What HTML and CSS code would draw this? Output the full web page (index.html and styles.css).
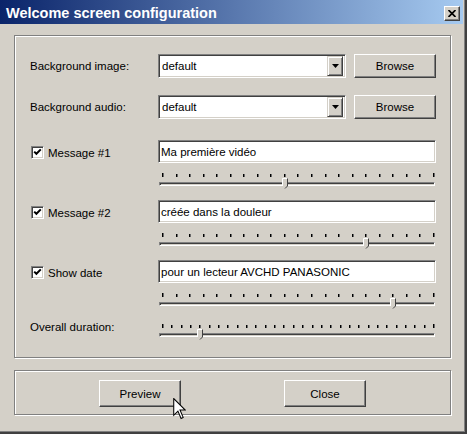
FILE: index.html
```html
<!DOCTYPE html>
<html lang="fr">
<head>
<meta charset="utf-8">
<title>Welcome screen configuration</title>
<link rel="stylesheet" href="styles.css">
</head>
<body>
<div class="window">
  <div class="titlebar">
    <span class="title">Welcome screen configuration</span>
    <span class="close-btn"><svg width="8" height="7" viewBox="0 0 8 7"><path d="M0.5 0 L7.5 7 M7.5 0 L0.5 7" stroke="#000" stroke-width="1.7" fill="none"/></svg></span>
  </div>
  <div class="body">
    <div class="group main">
      <div class="row file-row">
        <span class="label">Background image:</span>
        <div class="file-ctrls">
          <div class="combo"><span class="combo-text">default</span><span class="combo-btn"><svg width="7" height="4" viewBox="0 0 7 4"><polygon points="0,0 7,0 3.5,4" fill="#000"/></svg></span></div>
          <button class="btn browse">Browse</button>
        </div>
      </div>
      <div class="row file-row second">
        <span class="label">Background audio:</span>
        <div class="file-ctrls">
          <div class="combo"><span class="combo-text">default</span><span class="combo-btn"><svg width="7" height="4" viewBox="0 0 7 4"><polygon points="0,0 7,0 3.5,4" fill="#000"/></svg></span></div>
          <button class="btn browse">Browse</button>
        </div>
      </div>

      <div class="msg first">
        <label class="check"><span class="box"><svg width="9" height="9" viewBox="0 0 9 9"><path d="M1.2 3.6 L3.4 5.8 L7.8 1.4" stroke="#000" stroke-width="2" fill="none"/></svg></span>Message #1</label>
        <div class="textbox">Ma première vidéo</div>
        <div class="slider">
          <div class="ticks"><i class="end"></i><i></i><i></i><i></i><i></i><i></i><i></i><i></i><i></i><i></i><i></i><i></i><i></i><i></i><i></i><i></i><i></i><i></i><i></i><i></i><i class="end"></i></div>
          <div class="track"></div>
          <svg class="thumb" style="left:124px" width="6" height="11" viewBox="0 0 6 11"><polygon points="0.5,0.5 5.5,0.5 5.5,8 3,10.5 0.5,8" fill="#D4D0C8"/><polyline points="0.5,8 0.5,0.5 5.5,0.5" stroke="#fff" fill="none"/><polyline points="5.5,0.5 5.5,8 3,10.5" stroke="#404040" fill="none"/></svg>
        </div>
      </div>

      <div class="msg">
        <label class="check"><span class="box"><svg width="9" height="9" viewBox="0 0 9 9"><path d="M1.2 3.6 L3.4 5.8 L7.8 1.4" stroke="#000" stroke-width="2" fill="none"/></svg></span>Message #2</label>
        <div class="textbox">créée dans la douleur</div>
        <div class="slider">
          <div class="ticks"><i class="end"></i><i></i><i></i><i></i><i></i><i></i><i></i><i></i><i></i><i></i><i></i><i></i><i></i><i></i><i></i><i></i><i></i><i></i><i></i><i></i><i class="end"></i></div>
          <div class="track"></div>
          <svg class="thumb" style="left:205px" width="6" height="11" viewBox="0 0 6 11"><polygon points="0.5,0.5 5.5,0.5 5.5,8 3,10.5 0.5,8" fill="#D4D0C8"/><polyline points="0.5,8 0.5,0.5 5.5,0.5" stroke="#fff" fill="none"/><polyline points="5.5,0.5 5.5,8 3,10.5" stroke="#404040" fill="none"/></svg>
        </div>
      </div>

      <div class="msg">
        <label class="check"><span class="box"><svg width="9" height="9" viewBox="0 0 9 9"><path d="M1.2 3.6 L3.4 5.8 L7.8 1.4" stroke="#000" stroke-width="2" fill="none"/></svg></span>Show date</label>
        <div class="textbox">pour un lecteur AVCHD PANASONIC</div>
        <div class="slider">
          <div class="ticks"><i class="end"></i><i></i><i></i><i></i><i></i><i></i><i></i><i></i><i></i><i></i><i></i><i></i><i></i><i></i><i></i><i></i><i></i><i></i><i></i><i></i><i class="end"></i></div>
          <div class="track"></div>
          <svg class="thumb" style="left:232px" width="6" height="11" viewBox="0 0 6 11"><polygon points="0.5,0.5 5.5,0.5 5.5,8 3,10.5 0.5,8" fill="#D4D0C8"/><polyline points="0.5,8 0.5,0.5 5.5,0.5" stroke="#fff" fill="none"/><polyline points="5.5,0.5 5.5,8 3,10.5" stroke="#404040" fill="none"/></svg>
        </div>
      </div>

      <div class="row overall">
        <span class="label">Overall duration:</span>
        <div class="slider">
          <div class="ticks"><i class="end"></i><i></i><i></i><i></i><i></i><i></i><i></i><i></i><i></i><i></i><i></i><i></i><i></i><i></i><i></i><i></i><i></i><i></i><i></i><i></i><i></i><i></i><i></i><i></i><i></i><i></i><i></i><i></i><i></i><i class="end"></i></div>
          <div class="track"></div>
          <svg class="thumb" style="left:39px" width="6" height="11" viewBox="0 0 6 11"><polygon points="0.5,0.5 5.5,0.5 5.5,8 3,10.5 0.5,8" fill="#D4D0C8"/><polyline points="0.5,8 0.5,0.5 5.5,0.5" stroke="#fff" fill="none"/><polyline points="5.5,0.5 5.5,8 3,10.5" stroke="#404040" fill="none"/></svg>
        </div>
      </div>
    </div>

    <div class="group actions">
      <button class="btn action">Preview</button>
      <button class="btn action">Close</button>
    </div>
  </div>

  <svg class="cursor" width="13" height="22" viewBox="0 0 12 21"><polygon points="0.5,0.5 0.5,16.5 4.5,12.5 7.5,19.5 9.5,18.5 6.5,11.5 11.5,11.5" fill="#fff" stroke="#000" stroke-width="1" stroke-linejoin="miter"/></svg>
</div>
</body>
</html>
```

FILE: styles.css
```css
* { box-sizing: border-box; }
html, body { margin: 0; padding: 0; }
body {
  background: #D4D0C8;
  font-family: "Liberation Sans", Arial, sans-serif;
  font-size: 11.5px;
  color: #000;
}
.window {
  position: relative;
  width: 467px;
  height: 434px;
  background: #D4D0C8;
  box-shadow: inset -1px -1px #404040, inset -2px -2px #404040, inset -3px -3px #808080;
  overflow: hidden;
}
.titlebar {
  display: flex;
  align-items: center;
  width: 463px;
  height: 24px;
  padding: 0 3px 0 6px;
  background: linear-gradient(to right, #0A246A, #A6CAF0);
}
.title {
  color: #fff;
  font-weight: bold;
  font-size: 14.5px;
  line-height: 24px;
  padding-top: 1px;
  white-space: nowrap;
}
.close-btn {
  margin-left: auto;
  margin-top: 2px;
  width: 16px;
  height: 15px;
  display: flex;
  align-items: center;
  justify-content: center;
  background: #D4D0C8;
  border: 1px solid;
  border-color: #fff #404040 #404040 #fff;
  box-shadow: inset -1px -1px #808080;
}
.body {
  padding: 11px 0 0 14px;
}
.group {
  width: 437px;
  border: 1px solid #808080;
  box-shadow: inset 1px 1px #fff, 1px 1px #fff;
}
.main {
  height: 323px;
  padding: 18px 14px 0 15px;
}
.row, .msg {
  display: grid;
  grid-template-columns: 128px 278px;
}
.row { align-items: center; }
.file-row { height: 24px; }
.file-row.second { margin-top: 17px; }
.label { white-space: nowrap; }
.file-ctrls {
  display: flex;
  gap: 8px;
}
.combo, .textbox {
  background: #fff;
  border: 1px solid;
  border-color: #808080 #fff #fff #808080;
  box-shadow: inset 1px 1px #404040, inset -1px -1px #D4D0C8;
}
.combo {
  display: flex;
  width: 188px;
  height: 24px;
  padding: 1px;
}
.combo-text {
  flex: 1;
  display: flex;
  align-items: center;
  padding-left: 2px;
}
.combo-btn {
  width: 16px;
  height: 20px;
  margin-right: 1px;
  display: flex;
  align-items: center;
  justify-content: center;
  background: #D4D0C8;
  border: 1px solid;
  border-color: #D4D0C8 #404040 #404040 #D4D0C8;
  box-shadow: inset 1px 1px #fff, inset -1px -1px #808080;
}
.btn {
  font-family: "Liberation Sans", Arial, sans-serif;
  font-size: 11.5px;
  color: #000;
  background: #D4D0C8;
  border: 1px solid;
  border-color: #fff #404040 #404040 #fff;
  box-shadow: inset -1px -1px #808080;
  padding: 0;
  margin: 0;
}
.browse { width: 82px; height: 24px; }
.msg {
  align-items: center;
  row-gap: 10px;
  margin-top: 10px;
}
.msg.first { margin-top: 21px; }
.check {
  display: flex;
  align-items: center;
  gap: 4px;
  margin-left: 1px;
  margin-top: 2px;
  white-space: nowrap;
}
.box {
  width: 13px;
  height: 13px;
  display: flex;
  align-items: center;
  justify-content: center;
  background: #fff;
  border: 1px solid;
  border-color: #808080 #fff #fff #808080;
  box-shadow: inset 1px 1px #404040, inset -1px -1px #D4D0C8;
}
.textbox {
  height: 23px;
  display: flex;
  align-items: center;
  padding-left: 2px;
  white-space: nowrap;
}
.slider {
  grid-column: 2;
  position: relative;
  height: 17px;
}
.ticks {
  display: flex;
  justify-content: space-between;
  align-items: flex-end;
  margin-left: 4px;
  width: 272px;
  height: 4px;
}
.ticks i {
  display: block;
  width: 1px;
  height: 3px;
  background: #000;
  box-shadow: 1px 0 #6a6a6a;
}
.ticks i.end { height: 4px; }
.track {
  margin-top: 5px;
  margin-left: 1px;
  width: 276px;
  height: 4px;
  background: #D4D0C8;
  border: 1px solid;
  border-color: #808080 #fff #fff #808080;
  box-shadow: inset 1px 1px #404040;
}
.thumb {
  position: absolute;
  top: 5px;
}
.overall {
  margin-top: 14px;
  align-items: start;
}
.overall .label {
  line-height: 14px;
  margin-top: -4px;
}
.actions {
  margin-top: 12px;
  height: 45px;
  display: flex;
  justify-content: center;
  gap: 103px;
  padding-top: 9px;
}
.action { width: 82px; height: 27px; }
.cursor {
  position: absolute;
  left: 173px;
  top: 398px;
}
```
